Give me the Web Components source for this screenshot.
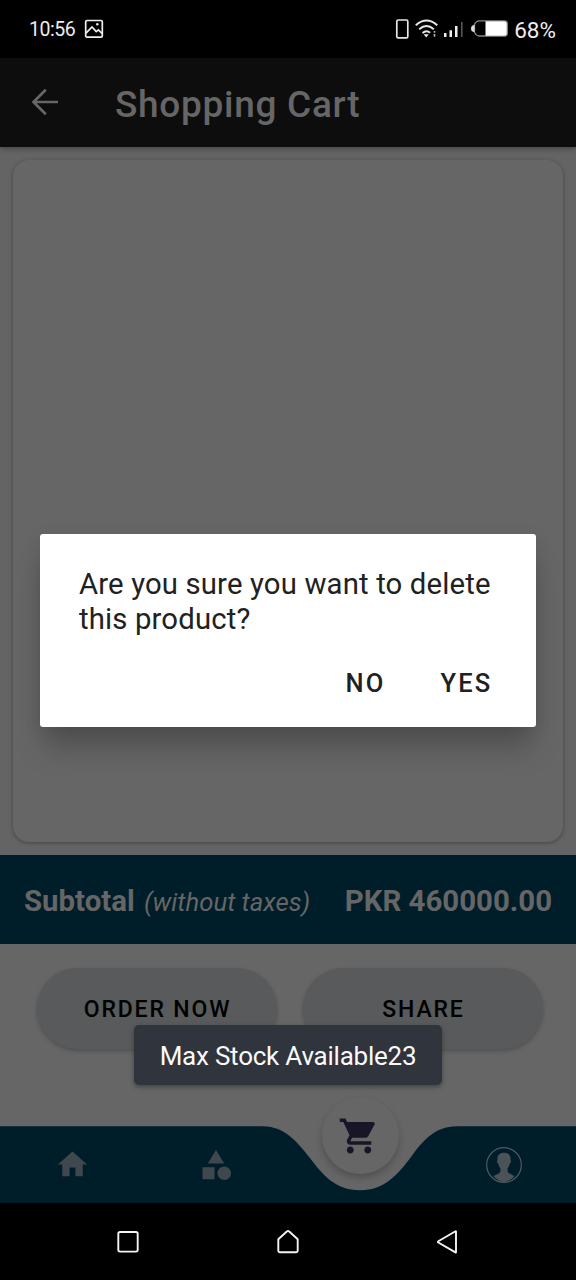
<!DOCTYPE html>
<html lang="en">
<head>
<meta charset="utf-8">
<title>Shopping Cart</title>
<style>
html,body{margin:0;padding:0;background:#000}
body{width:576px;height:1280px;overflow:hidden;font-family:Roboto,"Liberation Sans",sans-serif}
</style>
</head>
<body>
<cart-screen></cart-screen>
<script>
function component(name, html) {
  const template = document.createElement('template');
  template.innerHTML = html;
  customElements.define(name, class extends HTMLElement {
    constructor() {
      super();
      this.attachShadow({ mode: 'open' }).append(template.content.cloneNode(true));
    }
  });
}

component('status-bar', `
<style>
:host{display:flex;align-items:center;height:58px;padding:0 20px 0 29px;box-sizing:border-box;background:#000;color:#ededed}
.time{font-size:19.500px;letter-spacing:-.45px;line-height:24px;padding-top:1px}
.pct{font-size:22.500px;line-height:26px;padding-top:2px;margin-left:7px}
svg{display:block;flex:none}
.pic{margin-left:9px}
.right{margin-left:auto;display:flex;align-items:center}
</style>
<span class="time">10:56</span>
<svg class="pic" width="20" height="20" viewBox="0 0 20 20" fill="none" stroke="#eee" stroke-width="1.7"><rect x="1.7" y="1.5" width="16.6" height="16.6" rx="1.2"/><path d="M2 14.2L8 8l4.2 4.6 2.2-1.7 3.6 3.6"/><circle cx="13.3" cy="5.3" r="1.2" fill="#eee" stroke="none"/></svg>
<div class="right">
<svg width="112" height="22" viewBox="395 18 112 22" fill="none" overflow="visible">
<rect x="396.800" y="20" width="11" height="17.800" rx="1.400" stroke="#e6e6e6" stroke-width="1.700"/>
<g stroke="#e6e6e6" stroke-width="2"><path d="M415.800 25.300q10.700-9.500 21.400 0"/><path d="M419.200 29.200q7.300-6.400 14.600 0"/><path d="M422.500 33q4-3.500 7.600-.2"/></g>
<path d="M423.600 34.300h5.200l-2.600 3.200z" fill="#eee"/><path d="M434.500 31v1.800M434.500 34v2.800" stroke="#bbb" stroke-width="1.600"/>
<path d="M444 33h2.500v4H444zM449.500 30.300h2.500V37h-2.500zM455 26h2.500v11H455z" fill="#eee"/><path d="M461 22h1.600v15H461z" fill="#555"/>
<path d="M479 20.800h25.500q2.800 0 2.800 2.800v9.600q0 2.800-2.800 2.800H479q-2.500 0-4.500-3.500v-8.200q2-3.500 4.500-3.500z" stroke="#888" stroke-width="1.300"/>
<path d="M485.500 21.300h18.500q2.800 0 2.800 2.500v9.400q0 2.500-2.800 2.500h-18.500z" fill="#fff"/><path d="M474.500 25q-3.500 0-3.500 3.500t3.500 3.500z" fill="#ddd"/>
</svg><span class="pct">68%</span></div>`);

component('app-bar', `
<style>
:host{display:flex;align-items:center;height:89px;box-sizing:border-box;padding-left:27px;background:#0d0d0d;color:#666;box-shadow:0 2px 5px rgba(0,0,0,.3);position:relative}
svg{flex:none;margin-top:-1px}
.title{margin-left:52px;padding-top:4px;font-size:37px;line-height:44px;font-weight:500;letter-spacing:.7px;white-space:nowrap}
</style>
<svg width="36" height="36" viewBox="0 0 36 36" fill="none" stroke="#666" stroke-width="2.700"><path d="M31 18H6.500M18.800 5.800L6.500 18l12.300 12.200"/></svg>
<span class="title"><slot></slot></span>`);

component('cart-list', `
<style>
:host{display:block;box-sizing:border-box;height:708px;padding:13px;background:#646464}
div{height:682px;width:550px;border-radius:16px;background:#666;box-shadow:0 1px 4px rgba(0,0,0,.32)}
</style><div></div>`);

component('subtotal-bar', `
<style>
:host{display:flex;align-items:center;justify-content:space-between;height:89px;box-sizing:border-box;padding:3px 24px 0;background:#001e29;color:#666;font-weight:700;font-size:29.400px;white-space:nowrap}
i{font-weight:400;font-size:25.700px;margin-left:2px}
</style>
<span><slot></slot> <i><slot name="note"></slot></i></span><span><slot name="amount"></slot></span>`);

component('pill-button', `
<style>
:host{display:flex;align-items:center;justify-content:center;width:240px;height:81px;border-radius:41px;background:#595a5c;color:#000;font-weight:500;font-size:23px;letter-spacing:1.850px;box-shadow:0 2px 4px rgba(0,0,0,.22);white-space:nowrap}
span{padding:2px 0 0 2px}
</style><span><slot></slot></span>`);

component('bottom-nav', `
<style>
:host{display:grid;grid-template-columns:repeat(4,144px);height:77px;position:relative;align-items:center;justify-items:center}
.bg{position:absolute;left:0;top:0}
.ic{position:relative;display:block}
.fab{position:absolute;left:322px;top:-29px;width:77px;height:77px;border-radius:50%;background:#666;display:flex;align-items:center;justify-content:center;box-shadow:0 4px 7px rgba(0,0,0,.22)}
.fab svg{margin:1px 0 0 -3px}
</style>
<svg class="bg" width="576" height="77" viewBox="0 1126 576 77"><path fill="#001e29" d="M0 1126.300H263C285 1126.300 298 1143 310 1158C322 1174 335 1190.300 360 1190.300S398 1174 411 1157C422 1142 434 1126.300 457 1126.300H576V1203H0z"/></svg>
<svg class="ic" width="35" height="35" viewBox="0 0 24 24" fill="#40484f"><path d="M10 20v-6h4v6h5v-8h3L12 3 2 12h3v8z"/></svg>
<svg class="ic" width="36" height="36" viewBox="0 0 24 24" fill="#40484f"><path d="M12 2l-5.500 9h11zM3 13.500h8v8H3z"/><circle cx="17.500" cy="17.500" r="4.500"/></svg>
<span></span>
<svg class="ic" width="38" height="38" viewBox="0 0 38 38"><circle cx="19" cy="19" r="17.300" fill="none" stroke="#4c5a60" stroke-width="1.200"/><path fill="#4b5358" d="M19 6.800c4.800 0 6.900 2.700 6.500 7.200.8.600.5 2.900-.7 3.500-.4 2-1.100 3.400-2.200 4.700v3.600c1.500 2.200 4.600 2.700 6.900 4.500A16.500 16.500 0 0 1 19 35.900 16.500 16.500 0 0 1 8.500 30.300c2.300-1.800 5.400-2.300 6.900-4.500v-3.600c-1.100-1.300-1.800-2.700-2.200-4.700-1.200-.6-1.500-2.900-.7-3.500-.4-4.500 1.700-7.200 6.500-7.200z"/></svg>
<div class="fab"><svg width="42" height="42" viewBox="0 0 24 24" fill="#181626"><path d="M7 18c-1.100 0-1.990.9-1.990 2S5.900 22 7 22s2-.9 2-2-.9-2-2-2zM1 2v2h2l3.600 7.590-1.350 2.450c-.16.280-.25.610-.25.960 0 1.100.9 2 2 2h12v-2H7.420c-.14 0-.25-.11-.25-.25l.03-.12.900-1.630h7.450c.75 0 1.410-.41 1.750-1.030l3.580-6.490c.08-.14.120-.31.120-.48 0-.55-.45-1-1-1H5.210l-.94-2H1zm16 16c-1.100 0-1.990.9-1.990 2s.89 2 1.990 2 2-.9 2-2-.9-2-2-2z"/></svg></div>`);

component('system-nav', `
<style>
:host{display:flex;height:77px;align-items:center;justify-content:center;gap:132px;background:#000}
svg{display:block}
</style>
<svg width="28" height="28" viewBox="0 0 28 28" fill="none" stroke="#f4f4f4" stroke-width="1.900"><rect x="4.300" y="4" width="19.400" height="19.600" rx="1.800"/></svg>
<svg width="28" height="28" viewBox="0 0 28 28" fill="none" stroke="#f4f4f4" stroke-width="1.900" stroke-linejoin="round"><path d="M4.300 11.200L12.800 3.500q1.200-.9 2.400 0l8.500 7.700v11.600q0 1.500-1.500 1.500H5.800q-1.500 0-1.500-1.500z"/></svg>
<svg width="28" height="28" viewBox="0 0 28 28" fill="none" stroke="#f4f4f4" stroke-width="1.900" stroke-linejoin="round"><path d="M22 3.600v20.600q0 .5-.5.200L4.300 14.500q-.8-.6 0-1.200L21.500 3.300q.5-.2.500.3z"/></svg>`);

component('confirm-dialog', `
<style>
:host{position:absolute;left:40px;top:534px;width:496px;height:193px;box-sizing:border-box;background:#fff;border-radius:3px;color:#212121;padding:33px 39px 0;box-shadow:0 24px 28px -4px rgba(0,0,0,.22),0 4px 18px rgba(0,0,0,.08)}
p{margin:0;font-size:29.300px;line-height:35px;letter-spacing:.15px;white-space:nowrap}
.actions{display:flex;justify-content:flex-end;gap:55px;margin-top:30px;margin-right:4.500px;font-size:25.500px;line-height:32px;font-weight:500;letter-spacing:2.200px}
</style>
<p><slot></slot></p>
<div class="actions"><span>NO</span><span>YES</span></div>`);

component('toast-message', `
<style>
:host{position:absolute;left:134px;top:1025px;width:308px;height:60px;display:flex;align-items:center;justify-content:center;background:#2f343d;color:#fafafa;border-radius:5px;font-size:26px;letter-spacing:-.23px;white-space:nowrap;box-shadow:0 2px 5px rgba(0,0,0,.35)}
span{padding-top:2px}
</style><span><slot></slot></span>`);

component('cart-screen', `
<style>
:host{display:flex;flex-direction:column;position:relative;width:576px;height:1280px;overflow:hidden;background:#666}
.buttons{display:flex;justify-content:center;gap:26px;padding:24px 0 77px 3px}
</style>
<status-bar></status-bar>
<app-bar>Shopping Cart</app-bar>
<cart-list></cart-list>
<subtotal-bar>Subtotal<span slot="note">(without taxes)</span><span slot="amount">PKR 460000.00</span></subtotal-bar>
<div class="buttons"><pill-button>ORDER NOW</pill-button><pill-button>SHARE</pill-button></div>
<bottom-nav></bottom-nav>
<system-nav></system-nav>
<confirm-dialog>Are you sure you want to delete<br>this product?</confirm-dialog>
<toast-message>Max Stock Available23</toast-message>`);
</script>
</body>
</html>
